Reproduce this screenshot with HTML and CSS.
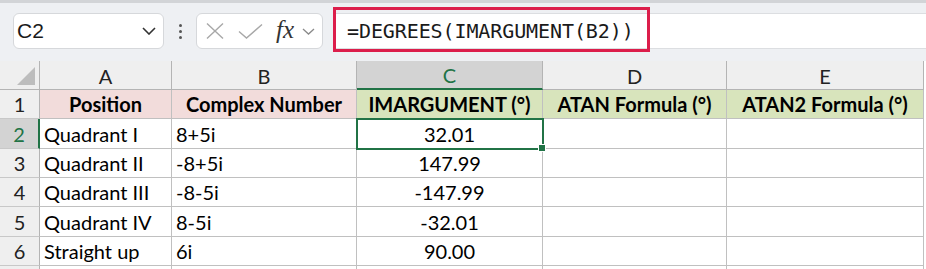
FILE: index.html
```html
<!DOCTYPE html>
<html>
<head>
<meta charset="utf-8">
<link rel="stylesheet" href="styles.css">
</head>
<body>
<div class="toolbar">
  <div class="namebox">
    <span class="ref">C2</span>
    <svg class="chev" width="14" height="8" viewBox="0 0 14 8"><path d="M1 1 L7 7 L13 1" fill="none" stroke="#333" stroke-width="1.6"/></svg>
  </div>
  <div class="dots"><i></i><i></i><i></i></div>
  <div class="fxbox">
    <svg width="18" height="16" viewBox="0 0 18 16"><path d="M1 0.5 L17 15.5 M17 0.5 L1 15.5" stroke="#a8a8a8" stroke-width="1.4" fill="none"/></svg>
    <svg width="25" height="15" viewBox="0 0 25 15"><path d="M1 7.5 L8.5 14 L24 0.5" stroke="#a8a8a8" stroke-width="1.4" fill="none"/></svg>
    <span class="fx">fx</span>
    <svg width="13" height="7" viewBox="0 0 13 7"><path d="M1 1 L6.5 6 L12 1" fill="none" stroke="#8a8a8a" stroke-width="1.3"/></svg>
  </div>
  <div class="formula">
    <span class="ftext">=DEGREES(IMARGUMENT(B2))</span>
    <span class="highlight"></span>
  </div>
</div>
<div class="sheet">
  <div class="corner"><span class="tri"></span></div>
  <div class="ch">A</div>
  <div class="ch">B</div>
  <div class="ch sel">C</div>
  <div class="ch">D</div>
  <div class="ch">E</div>

  <div class="rh">1</div>
  <div class="c hp">Position</div>
  <div class="c hp">Complex Number</div>
  <div class="c hg">IMARGUMENT (°)</div>
  <div class="c hg">ATAN Formula (°)</div>
  <div class="c hg">ATAN2 Formula (°)</div>

  <div class="rh sel">2</div>
  <div class="c">Quadrant I</div>
  <div class="c">8+5i</div>
  <div class="c num active">32.01<span class="handle"></span></div>
  <div class="c"></div>
  <div class="c"></div>

  <div class="rh">3</div>
  <div class="c">Quadrant II</div>
  <div class="c">-8+5i</div>
  <div class="c num">147.99</div>
  <div class="c"></div>
  <div class="c"></div>

  <div class="rh">4</div>
  <div class="c">Quadrant III</div>
  <div class="c">-8-5i</div>
  <div class="c num">-147.99</div>
  <div class="c"></div>
  <div class="c"></div>

  <div class="rh">5</div>
  <div class="c">Quadrant IV</div>
  <div class="c">8-5i</div>
  <div class="c num">-32.01</div>
  <div class="c"></div>
  <div class="c"></div>

  <div class="rh">6</div>
  <div class="c">Straight up</div>
  <div class="c">6i</div>
  <div class="c num">90.00</div>
  <div class="c"></div>
  <div class="c"></div>

  <div class="rh"></div>
  <div class="c"></div>
  <div class="c"></div>
  <div class="c"></div>
  <div class="c"></div>
  <div class="c"></div>
</div>
</body>
</html>
```
FILE: styles.css
```css
* { box-sizing: border-box; }
html, body { margin: 0; padding: 0; }
body {
  width: 926px;
  height: 269px;
  overflow: hidden;
  background: #ffffff;
  font-family: Lato, "Open Sans", sans-serif;
}
.toolbar {
  height: 61px;
  background: #eef0f3;
  border-top: 3px solid #d2d4d7;
  display: flex;
  align-items: flex-start;
  padding-top: 10px;
}
.namebox {
  margin-left: 13px;
  width: 151px;
  height: 36px;
  background: #fff;
  border: 1px solid #d6d8db;
  border-radius: 6px;
  display: flex;
  align-items: center;
  justify-content: space-between;
  padding: 0 7px 0 3px;
}
.ref {
  font-family: "Liberation Sans", Arial, sans-serif;
  font-size: 21px;
  color: #1a1a1a;
}
.dots {
  width: 32px;
  height: 36px;
  display: flex;
  flex-direction: column;
  align-items: center;
  justify-content: center;
  gap: 3px;
}
.dots i {
  display: block;
  width: 3px;
  height: 3px;
  border-radius: 50%;
  background: #555;
}
.fxbox {
  width: 127px;
  height: 36px;
  background: #fff;
  border: 1px solid #d6d8db;
  border-radius: 6px;
  display: flex;
  align-items: center;
  padding-left: 9px;
  gap: 13px;
}
.fxbox svg:first-child { margin-right: 1px; }
.fx {
  font-family: "Liberation Serif", "DejaVu Serif", serif;
  font-style: italic;
  font-size: 25px;
  color: #333;
  margin-top: -2px;
  margin-right: -5px;
}
.formula {
  position: relative;
  flex: 1;
  margin-left: 10px;
  height: 36px;
  background: #fff;
  border-top: 1px solid #dcdee1;
  border-bottom: 1px solid #dcdee1;
  display: flex;
  align-items: center;
  padding-left: 14px;
}
.ftext {
  font-family: "DejaVu Sans Mono", "Liberation Mono", monospace;
  font-size: 20px;
  letter-spacing: -0.1px;
  color: #1a1a1a;
}
.highlight {
  position: absolute;
  left: 0;
  top: -7px;
  width: 317px;
  height: 45px;
  border: 3px solid #dc1e4b;
}
.sheet {
  display: grid;
  grid-template-columns: 40px 132px 185px 186px 184px 197px;
  grid-template-rows: 29px 29px 30px 29px 29px 30px 29px 29px;
  font-size: 20px;
  color: #000;
}
.corner {
  background: #efefef;
  border-right: 1px solid #b4b4b4;
  border-bottom: 1px solid #b4b4b4;
  position: relative;
}
.tri {
  position: absolute;
  right: 4px;
  bottom: 4px;
  width: 0;
  height: 0;
  border-left: 18px solid transparent;
  border-bottom: 18px solid #bdbdbd;
}
.ch {
  background: #efefef;
  border-right: 1px solid #b4b4b4;
  border-bottom: 1px solid #b4b4b4;
  display: flex;
  align-items: center;
  justify-content: center;
  color: #222;
  padding-top: 1px;
}
.ch.sel {
  background: #d3d3d3;
  color: #217346;
  border-bottom: 2px solid #217346;
}
.rh {
  background: #efefef;
  border-right: 1px solid #b4b4b4;
  border-bottom: 1px solid #c8c8c8;
  display: flex;
  align-items: center;
  justify-content: center;
  color: #222;
}
.rh.sel {
  background: #d3d3d3;
  color: #217346;
  border-right: 2px solid #217346;
}
.c {
  border-right: 1px solid #c0c0c0;
  border-bottom: 1px solid #c0c0c0;
  display: flex;
  align-items: center;
  padding-left: 4px;
  white-space: nowrap;
  overflow: visible;
}
.hp {
  background: #f2dcdb;
  font-weight: bold;
  justify-content: center;
  padding-left: 0;
}
.hg {
  background: #d8e4bc;
  font-weight: bold;
  justify-content: center;
  padding-left: 0;
}
.num {
  justify-content: center;
  padding-left: 0;
}
.active {
  position: relative;
  z-index: 2;
  outline: 2px solid #217346;
  outline-offset: -1px;
}
.handle {
  position: absolute;
  right: -4px;
  bottom: -4px;
  width: 8px;
  height: 8px;
  background: #217346;
  border: 1px solid #fff;
}
```
